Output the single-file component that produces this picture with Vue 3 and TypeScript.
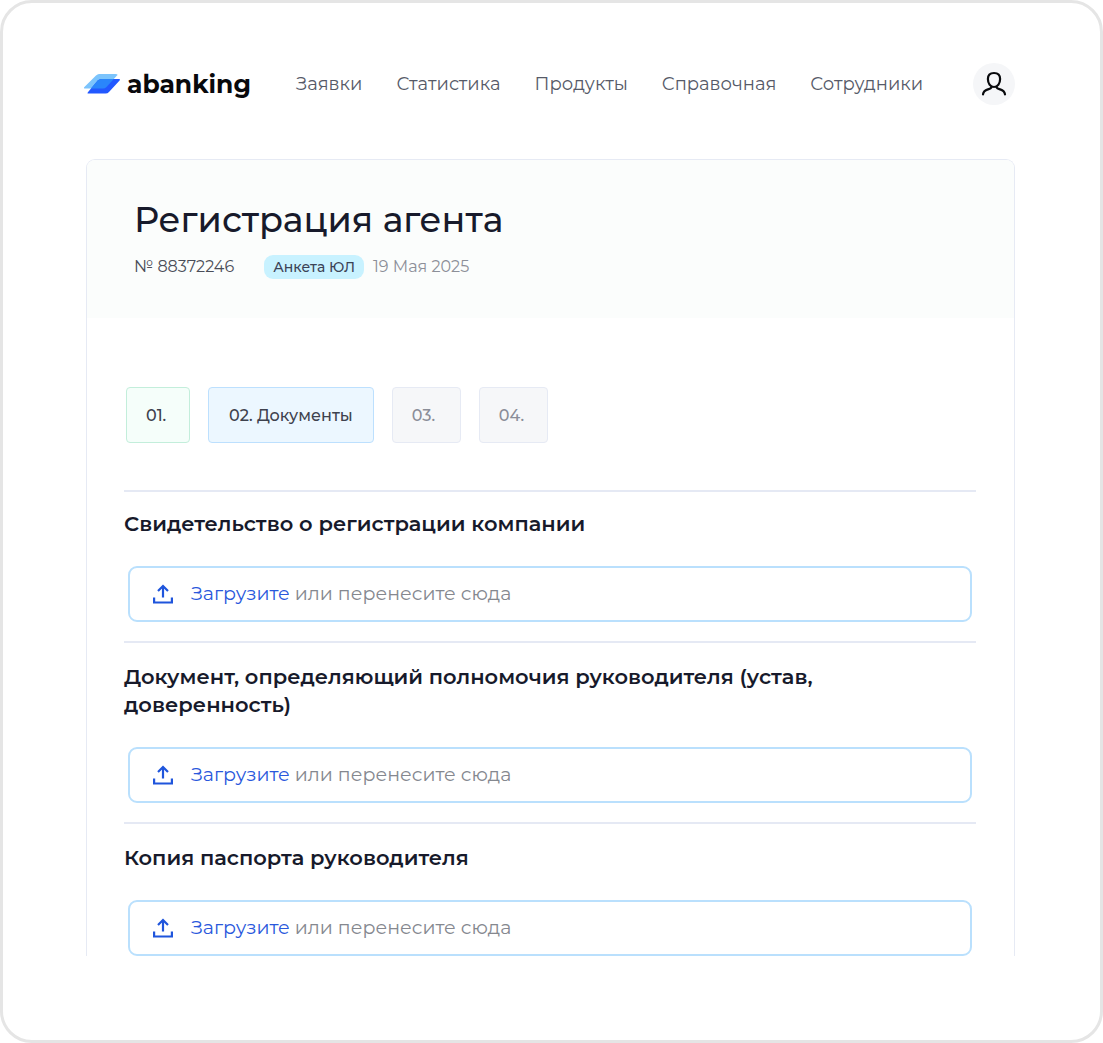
<script setup lang="ts">
interface Step {
  label: string
  state: 'done' | 'current' | 'next'
}

interface DocumentField {
  id: string
  title: string
}

const links: string[] = ['Заявки', 'Статистика', 'Продукты', 'Справочная', 'Сотрудники']

const steps: Step[] = [
  { label: '01.', state: 'done' },
  { label: '02. Документы', state: 'current' },
  { label: '03.', state: 'next' },
  { label: '04.', state: 'next' },
]

const documents: DocumentField[] = [
  { id: 'certificate', title: 'Свидетельство о регистрации компании' },
  { id: 'authority', title: 'Документ, определяющий полномочия руководителя (устав, доверенность)' },
  { id: 'passport', title: 'Копия паспорта руководителя' },
]
</script>

<template>
  <div class="frame">
    <header class="topbar">
      <a class="logo" href="#">
        <svg class="logo-mark" viewBox="0 0 38 22" aria-hidden="true">
          <path d="M15 1H31.500Q34.500 1 33 2.500L22.500 14Q21 15.500 19 15.500H1Q-1 15.500 .4 14L12 2.500Q13.500 1 15 1Z" fill="#7cc4fc" />
          <path d="M17.500 6H35Q37 6 35.600 7.500L25 18.900Q23.500 20.500 21.500 20.500H4.500Q2.700 20.500 4.100 18.900L13.700 7.500Q15.200 6 17.500 6Z" fill="#2258ff" />
          <path d="M17.500 6H29.800L22.500 14Q21 15.500 19 15.500H7L13.700 7.500Q15.200 6 17.500 6Z" fill="#2a86fb" />
        </svg>
        <span>abanking</span>
      </a>
      <nav class="nav">
        <a v-for="link in links" :key="link" href="#">{{ link }}</a>
      </nav>
      <button class="profile" type="button" aria-label="Профиль">
        <svg viewBox="0 0 26 26" fill="none" stroke="#08090c" stroke-width="2.200" stroke-linecap="round" aria-hidden="true">
          <path d="M13 2C9 2 6.900 4.300 6.900 8C6.900 12.200 9.200 16 13 16S19.100 12.200 19.100 8C19.100 4.300 17 2 13 2Z" />
          <path d="M10.800 16C10 17.600 8.600 17.900 6.800 18.400C4 19.200 2.300 20.900 2 23.400M15.200 16C16 17.600 17.400 17.900 19.200 18.400C22 19.200 23.700 20.900 24 23.400" />
        </svg>
      </button>
    </header>

    <main class="card">
      <div class="card-head">
        <h1>Регистрация агента</h1>
        <div class="meta">
          <span class="number">№ 88372246</span>
          <span class="tag">Анкета ЮЛ</span>
          <span class="date">19 Мая 2025</span>
        </div>
      </div>

      <div class="card-body">
        <div class="steps">
          <button v-for="step in steps" :key="step.label" type="button" class="step" :class="step.state">
            {{ step.label }}
          </button>
        </div>

        <section v-for="doc in documents" :key="doc.id" class="document">
          <h2>{{ doc.title }}</h2>
          <label class="upload" :for="doc.id">
            <input :id="doc.id" class="file" type="file" />
            <svg viewBox="0 0 20 20" fill="none" stroke="#1f55dc" stroke-width="2.200" aria-hidden="true">
              <path d="M10 13.500V2M5 7L10 2L15 7M1.100 13.500V18.500H18.900V13.500" />
            </svg>
            <span><span class="action">Загрузите</span> или перенесите сюда</span>
          </label>
        </section>
      </div>
    </main>
  </div>
</template>

<style>
body {
  margin: 0;
  background: #fff;
}
</style>

<style scoped>
.frame,
.frame * {
  box-sizing: border-box;
}

.frame {
  min-height: 100vh;
  padding: 60px 85px 84px 83px;
  border: 3px solid #e5e5e5;
  border-radius: 32px;
  background: #fff;
  color: #171a2b;
  font-family: Montserrat, Inter, "Noto Sans", sans-serif;
}

.topbar {
  display: flex;
  align-items: center;
  height: 42px;
}

.logo {
  display: flex;
  align-items: center;
  gap: 5px;
  width: 212px;
  margin-left: -2px;
  color: #08090c;
  font-size: 25px;
  font-weight: 700;
  line-height: 32px;
  text-decoration: none;
}

.logo-mark {
  width: 38px;
  height: 22px;
}

.nav {
  display: flex;
  gap: 34px;
}

.nav a {
  color: #565a68;
  font-size: 18px;
  font-weight: 400;
  line-height: 24px;
  text-decoration: none;
}

.profile {
  display: flex;
  align-items: center;
  justify-content: center;
  width: 42px;
  height: 42px;
  margin-left: auto;
  padding: 0;
  border: 0;
  border-radius: 50%;
  background: #f5f6f8;
}

.profile svg {
  width: 26px;
  height: 26px;
}

.card {
  margin-top: 54px;
  border: 1px solid #e6eaf4;
  border-bottom: 0;
  border-radius: 9px 9px 0 0;
}

.card-head {
  height: 158px;
  padding: 36px 47px 0;
  border-radius: 8px 8px 0 0;
  background: #fbfdfc;
}

h1 {
  margin: 0;
  font-size: 35px;
  font-weight: 500;
  line-height: 48px;
}

.meta {
  display: flex;
  align-items: center;
  margin-top: 11px;
  font-size: 16px;
  line-height: 24px;
}

.number {
  color: #4a4d58;
}

.tag {
  margin: 0 9px 0 30px;
  padding: 0 9px;
  border-radius: 9px;
  background: #c8f2ff;
  color: #3b4356;
  font-size: 14px;
  font-weight: 500;
}

.date {
  color: #8c8f98;
}

.card-body {
  padding: 69px 38px 0 37px;
}

.steps {
  display: flex;
  gap: 18px;
  margin: 0 2px 47px;
}

.step {
  min-width: 64px;
  height: 56px;
  padding: 0 19px;
  border: 1px solid #e6eaf4;
  border-radius: 4px;
  background: #f6f7f9;
  color: #8a8d98;
  font-family: inherit;
  font-size: 16px;
  font-weight: 500;
  text-align: left;
}

.step.next {
  min-width: 69px;
}

.step.done {
  border-color: #c3eedb;
  background: #f5fefa;
  color: #3e424e;
}

.step.current {
  padding: 0 20px;
  border-color: #bde0fe;
  background: #ecf7ff;
  color: #3e424e;
}

.document {
  padding: 20px 0 19px;
  border-top: 2px solid #e5e9f4;
}

.document:first-of-type {
  padding-top: 18px;
}

.document:last-of-type {
  padding-bottom: 0;
}

h2 {
  margin: 0 0 28px;
  font-size: 21px;
  font-weight: 600;
  line-height: 28px;
}

.upload {
  display: flex;
  align-items: center;
  gap: 18px;
  height: 56px;
  margin: 0 4px;
  padding: 0 23px;
  border: 2px solid #bae0fd;
  border-radius: 9px;
  color: #85888f;
  font-size: 19px;
  line-height: 28px;
}

.upload svg {
  width: 20px;
  height: 20px;
}

.file {
  position: absolute;
  width: 1px;
  height: 1px;
  opacity: 0;
}

.action {
  color: #2a58dc;
}
</style>
